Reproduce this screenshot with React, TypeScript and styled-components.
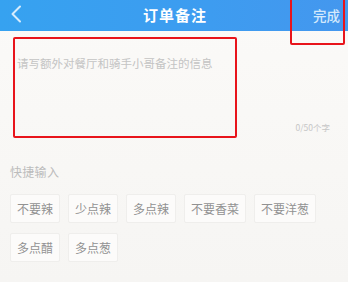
import React from "react";
import styled, { createGlobalStyle } from "styled-components";

const GlobalStyle = createGlobalStyle`
    html, body {
        margin: 0;
        padding: 0;
        background: #f7f6f4;
        font-family: "Noto Sans CJK SC", "Noto Sans", sans-serif;
    }
`;

const quickTags = ["不要辣", "少点辣", "多点辣", "不要香菜", "不要洋葱", "多点醋", "多点葱"];

const Page = styled.div`
    position: relative;
    width: 348px;
    height: 282px;
    overflow: hidden;
    background: linear-gradient(180deg, #fbfaf8 0%, #f6f5f3 100%);
`;

const Header = styled.div`
    height: 31px;
    display: flex;
    align-items: center;
    justify-content: space-between;
    padding: 0 8px 0 10px;
    background: linear-gradient(90deg, #36a2f0 0%, #3d9cf0 60%, #4497ee 100%);
    color: #fff;
`;

const Back = styled.div`
    width: 40px;
    display: flex;
    align-items: center;
    margin-top: -4px;
`;

const Title = styled.div`
    font-size: 15px;
    font-weight: 700;
    letter-spacing: 1px;
    margin-top: -3px;
`;

const Done = styled.div`
    width: 40px;
    text-align: right;
    font-size: 13.5px;
    font-weight: 500;
    color: #d3e9fc;
    margin-top: -2px;
`;

const Editor = styled.div`
    height: 110px;
    display: flex;
    flex-direction: column;
    padding: 0 18px 0 17px;
`;

const Placeholder = styled.div`
    margin-top: 25px;
    font-size: 11.5px;
    line-height: 14px;
    color: #c4c4c4;
    white-space: nowrap;
`;

const Counter = styled.div`
    margin-top: auto;
    margin-bottom: 8px;
    align-self: flex-end;
    font-size: 8.5px;
    color: #c6c6c6;
`;

const Quick = styled.div`
    padding: 24px 10px 0;
`;

const Label = styled.div`
    font-size: 12px;
    line-height: 14px;
    color: #bcbcbc;
    letter-spacing: 0.3px;
`;

const Tags = styled.div`
    display: flex;
    flex-wrap: wrap;
    gap: 10px 8px;
    margin-top: 15px;
    width: 320px;
`;

const Tag = styled.div`
    height: 27px;
    padding: 0 6px;
    display: flex;
    align-items: center;
    justify-content: center;
    font-size: 12px;
    color: #929292;
    background: #fcfbfa;
    border: 1px solid #efeeec;
    border-radius: 2px;
`;

const Mark = styled.div<{ $left: number; $top: number; $width: number; $height: number }>`
    position: absolute;
    left: ${({ $left }) => $left}px;
    top: ${({ $top }) => $top}px;
    width: ${({ $width }) => $width}px;
    height: ${({ $height }) => $height}px;
    box-sizing: border-box;
    border: 2.5px solid #e8141b;
    border-radius: 2px;
`;

export default function App() {
    return (
        <Page>
            <GlobalStyle />
            <Header>
                <Back>
                    <svg width="12" height="18" viewBox="0 0 12 18">
                        <path d="M10 1.5 L2.5 9 L10 16.5" fill="none" stroke="#d6ecfd" strokeWidth="2" strokeLinecap="round" strokeLinejoin="round" />
                    </svg>
                </Back>
                <Title>订单备注</Title>
                <Done>完成</Done>
            </Header>
            <Editor>
                <Placeholder>请写额外对餐厅和骑手小哥备注的信息</Placeholder>
                <Counter>0/50个字</Counter>
            </Editor>
            <Quick>
                <Label>快捷输入</Label>
                <Tags>
                    {quickTags.map((tag) => (
                        <Tag key={tag}>{tag}</Tag>
                    ))}
                </Tags>
            </Quick>
            <Mark $left={290} $top={-3} $width={55} $height={48} />
            <Mark $left={13} $top={37} $width={224} $height={101} />
        </Page>
    );
}
